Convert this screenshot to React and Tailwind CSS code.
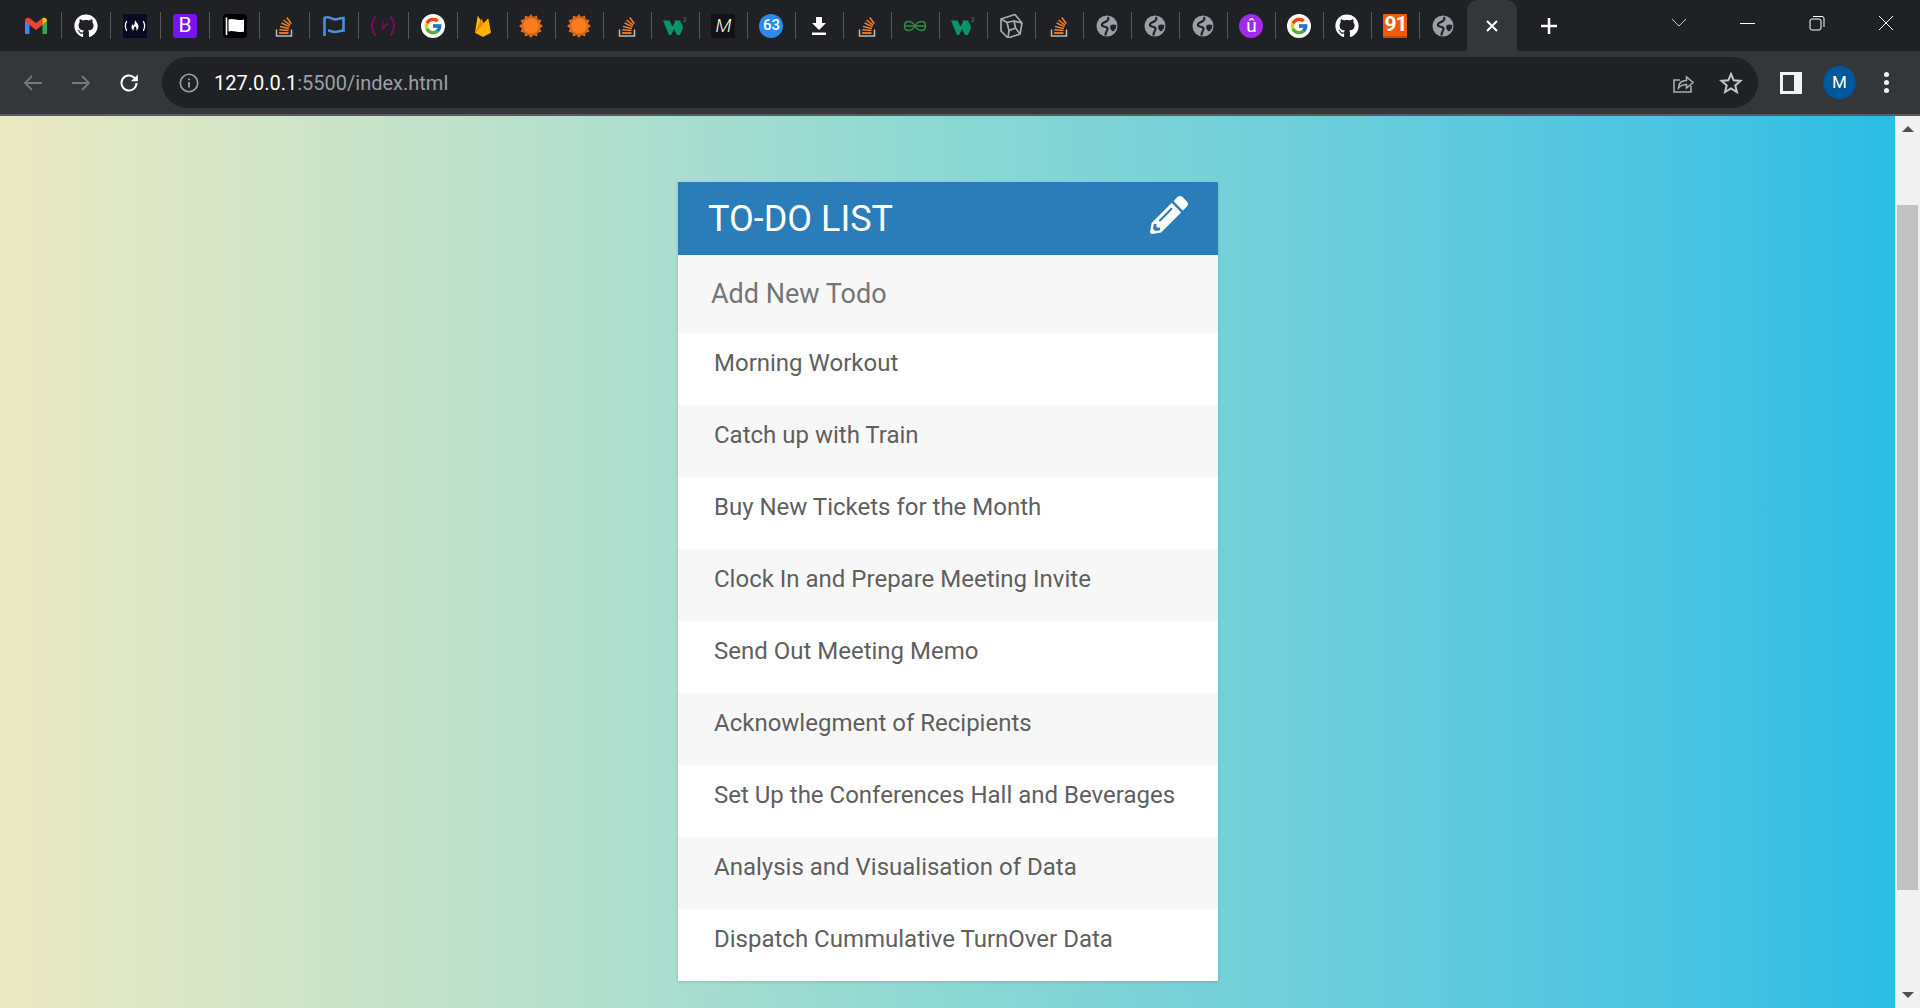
import React from 'react';
import { FaGithub, FaPencilAlt } from 'react-icons/fa';
import { FcGoogle } from 'react-icons/fc';

const todos = [
    'Morning Workout',
    'Catch up with Train',
    'Buy New Tickets for the Month',
    'Clock In and Prepare Meeting Invite',
    'Send Out Meeting Memo',
    'Acknowlegment of Recipients',
    'Set Up the Conferences Hall and Beverages',
    'Analysis and Visualisation of Data',
    'Dispatch Cummulative TurnOver Data',
];

const Gmail = () => (
    <svg viewBox="0 0 24 24" className="w-6 h-6" fill="none">
        <path d="M1 7v13h4.500V10z" fill="#4285f4" />
        <path d="M23 7v13h-4.500V10z" fill="#34a853" />
        <path d="M1 7c0-3 3-4 5-2.500l6 4.500 6-4.500c2-1.500 5-.5 5 2.500l-4.500 4L12 16l-6.500-5z" fill="#ea4335" />
        <path d="M18.500 4.200c2-1 4.500 0 4.500 2.800l-4.500 4z" fill="#fbbc04" />
    </svg>
);

const Github = () => <FaGithub className="w-6 h-6 text-white" />;

const Fcc = () => (
    <div className="w-6 h-6 bg-[#0a0a23] flex items-center justify-center">
        <svg viewBox="0 0 24 24" className="w-6 h-6" fill="none">
            <path d="M3.500 7.500c-1.500 3-1.500 6 0 9M20.500 7.500c1.500 3 1.500 6 0 9" stroke="#fff" strokeWidth="1.300" strokeLinecap="round" />
            <path d="M12 6c.8 2 3.500 3.500 3.500 6.500 0 2-1.500 4-2.500 4 .8-1 1-2.500-1-4.500-.5 1.500-2 2.500-1 4.500-1 0-2.500-1.500-2.500-3.500 0-1.500 1-2.500 1.500-3 0 1 .3 1.500.8 1.500 1-1 1-3 1.200-5.500z" fill="#fff" />
        </svg>
    </div>
);

const Bootstrap = () => (
    <div className="w-6 h-6 rounded-[3px] bg-[#7a12f2] flex items-center justify-center text-white text-[21px] leading-none font-normal font-['Roboto',sans-serif]">B</div>
);

const BlackFlag = () => (
    <div className="w-6 h-6 rounded-[4px] bg-black flex items-center justify-center">
        <svg viewBox="0 0 24 24" className="w-6 h-6">
            <path d="M3.500 3.500v17.500" stroke="#fff" strokeWidth="1.600" />
            <path d="M5.500 5.500c5-2 9 2 15.500 0v12c-6 2-10.500-2-15.500 0z" fill="#fff" />
        </svg>
    </div>
);

const StackOverflow = () => (
    <svg viewBox="0 0 24 24" className="w-6 h-6" fill="none">
        <path d="M4.500 15.500V22h15v-6.500" stroke="#bcbbbb" strokeWidth="1.500" />
        <path d="M7 19h9.500" stroke="#f48024" strokeWidth="1.800" />
        <path d="M7.300 15.800l9.200.6M8 12.400l8.900 2M9.500 9l8 3.600M11.500 6l6.600 5.200M14.800 3.500l4.500 6.300" stroke="#f48024" strokeWidth="1.500" />
    </svg>
);

const BlueFlag = () => (
    <svg viewBox="0 0 24 24" className="w-6 h-6" fill="none">
        <path d="M2.500 22V3.800c4-2 6 .7 9.500 1.500 3 .5 5-1 9.500-1.300v12.500c-4 .3-6 2-9.500 1.500-2-.3-4-1.500-6-1.500" stroke="#4a8fdd" strokeWidth="2.600" />
    </svg>
);

const Regex = () => (
    <svg viewBox="0 0 24 24" className="w-6 h-6" fill="none">
        <path d="M4 3c-4 6-4 12 0 18M20 3c4 6 4 12 0 18" stroke="#70105e" strokeWidth="2.100" strokeLinecap="round" />
        <path d="M11.500 6.500v8l5.500-5" stroke="#70105e" strokeWidth="1.800" />
    </svg>
);

const Google = () => (
    <div className="w-6 h-6 rounded-full bg-white flex items-center justify-center">
        <FcGoogle className="w-5 h-5" />
    </div>
);

const Firebase = () => (
    <svg viewBox="0 0 24 24" className="w-6 h-6">
        <path d="M4 18.700L6.600 2.600c.1-.4.6-.5.8-.1L10.500 8z" fill="#ffc107" />
        <path d="M13 9.500l-2.100-4.200c-.2-.4-.8-.4-1 0L4 18.700z" fill="#f6820c" />
        <path d="M17.500 5.200c-.1-.4-.7-.6-1-.3L4 18.700l7 3.900c.6.3 1.300.3 1.900 0l7.100-3.900z" fill="#ffb300" />
    </svg>
);

const sunTeeth = Array.from({ length: 12 }, (_, i) => i * 30);

const Sun = () => (
    <svg viewBox="0 0 24 24" className="w-6 h-6">
        {sunTeeth.map(a => (
            <path key={a} d="M9.800 3L12 0l2.200 3z" fill="#ea6f1e" transform={`rotate(${a} 12 12)`} />
        ))}
        <circle cx="12" cy="12" r="9.700" fill="#ea6f1e" />
        <circle cx="12" cy="12" r="8.700" fill="#a9561f" />
        <circle cx="12" cy="12" r="8" fill="#fb7c1c" />
    </svg>
);

const W3 = () => (
    <svg viewBox="0 0 24 24" className="w-6 h-6">
        <path d="M0 6.500h6.500l3 6 2.500-4.500-.8-1.500h6l3 7-3.200 7.500h-3L11 15l-3 6H6z" fill="#04956c" />
        <text x="19.800" y="8" fontSize="7" fill="#04956c" fontFamily="Roboto, sans-serif">3</text>
    </svg>
);

const Medium = () => (
    <div className="w-6 h-6 bg-[#121212] flex items-center justify-center text-white text-[19px] leading-none italic font-light font-['Roboto',sans-serif]">M</div>
);

const Badge = () => (
    <div className="w-6 h-6 rounded-full bg-[#2a8bec] flex items-center justify-center text-white text-[15px] leading-none font-medium font-['Roboto',sans-serif]">63</div>
);

const Download = () => (
    <svg viewBox="0 0 24 24" className="w-6 h-6" fill="#fff">
        <path d="M9 3h6v6h4l-7 7-7-7h4z" />
        <path d="M5 18.500h14V21H5z" />
    </svg>
);

const Geeks = () => (
    <svg viewBox="0 0 24 24" className="w-6 h-6" fill="none" stroke="#2f8d46" strokeWidth="1.500">
        <path d="M1.500 12h21" />
        <path d="M12 12C10 8.500 8 7.500 5.500 7.500 3 7.500 1.500 9.500 1.500 12S3 16.500 5.500 16.500C8 16.500 10 15.500 12 12z" />
        <path d="M12 12c2-3.500 4-4.500 6.500-4.500 2.500 0 4 2 4 4.500s-1.500 4.500-4 4.500c-2.500 0-4.500-1-6.500-4.500z" />
    </svg>
);

const Cube = () => (
    <svg viewBox="0 0 24 24" className="w-6 h-6" fill="none" stroke="#aaaaaa" strokeWidth="1.700">
        <path d="M2 5l14-4.500L23 9l-2 11-12 4-7-7z" />
        <path d="M8 8.500l7-1.500 1.500 7-6.500 2.500z" />
        <path d="M2 5l6 3.500M23 9l-8-2M9 24l1-7.500M21 20l-4.500-6" />
    </svg>
);

const Globe = () => (
    <svg viewBox="0 0 24 24" className="w-6 h-6">
        <circle cx="12" cy="12" r="10.500" fill="#9aa0a6" />
        <path d="M13 3c1.500 3-1.500 4.500-4 5.500S6 12 9 12.500s4.500 1.500 3 4-1.500 3.500-1.500 5" fill="none" stroke="#202124" strokeWidth="2.200" />
        <path d="M15.500 11.500c2-1.500 4.500-1 6 0-.3 2.500-1.500 4.500-3.500 6-2-1-3.500-4-2.500-6z" fill="#202124" />
    </svg>
);

const Udemy = () => (
    <div className="w-6 h-6 rounded-full bg-[#a02be8] flex items-center justify-center text-white text-[19px] leading-none font-normal font-['Roboto',sans-serif]">û</div>
);

const Ninety = () => (
    <div className="w-6 h-6 rounded-[1px] bg-[#f25a05] border-b-2 border-[#c84a08] flex items-center justify-center text-white text-[21px] leading-none font-bold tracking-[-1px] font-['Roboto',sans-serif]">91</div>
);

const favicons = [
    Gmail, Github, Fcc, Bootstrap, BlackFlag, StackOverflow, BlueFlag, Regex, Google, Firebase,
    Sun, Sun, StackOverflow, W3, Medium, Badge, Download, StackOverflow, Geeks, W3, Cube,
    StackOverflow, Globe, Globe, Globe, Udemy, Google, Github, Ninety, Globe,
];

const App = () => {
    return (
        <div className="h-[1008px] w-full overflow-hidden flex flex-col bg-white font-['Roboto',sans-serif]">
            {/* tab strip */}
            <div className="h-[51px] bg-[#202124] flex items-center shrink-0 pl-[12px]">
                {favicons.map((Fav, i) => (
                    <div
                        key={i}
                        className={`h-[27px] flex items-center justify-center border-r-[1.5px] border-[#54565a] shrink-0 ${i < 10 ? 'w-[49.6px]' : 'w-[48px]'}`}
                    >
                        <Fav />
                    </div>
                ))}
                <div className="w-[50px] h-[51px] -ml-[0.5px] bg-[#35363a] rounded-t-[10px] flex items-center justify-center shrink-0">
                    <svg viewBox="0 0 16 16" className="w-4 h-4" stroke="#fff" strokeWidth="2"><path d="M3 3l10 10M13 3L3 13" /></svg>
                </div>
                <svg viewBox="0 0 20 20" className="w-5 h-5 ml-[22px] shrink-0" stroke="#fff" strokeWidth="2.500"><path d="M10 2v16M2 10h16" /></svg>
                <div className="flex-1" />
                <svg viewBox="0 0 16 10" className="w-4 h-[10px] mr-[53px] mb-[6px] shrink-0" fill="none" stroke="#c8c8c8"><path d="M1 1l7 7 7-7" /></svg>
                <div className="w-[15px] h-px bg-white mr-[54px] mb-[5px] shrink-0" />
                <svg viewBox="0 0 16 16" className="w-4 h-4 mr-[53px] mb-[5px] shrink-0" fill="none" stroke="#fff"><rect x="1" y="4" width="11" height="11" rx="2" /><path d="M4 1.500h9a2 2 0 0 1 2 2V12" /></svg>
                <svg viewBox="0 0 16 16" className="w-4 h-4 mr-[26px] mb-[5px] shrink-0" stroke="#fff"><path d="M1 1l14 14M15 1L1 15" /></svg>
            </div>

            {/* toolbar */}
            <div className="h-[63px] bg-[#35363a] border-b-[2px] border-[#5a5b5e] box-content flex items-center shrink-0">
                <svg viewBox="0 0 24 24" className="w-6 h-6 ml-[21px] shrink-0" fill="none" stroke="#77787b" strokeWidth="1.800"><path d="M21 12H4M11 5l-7 7 7 7" /></svg>
                <svg viewBox="0 0 24 24" className="w-6 h-6 ml-[24px] shrink-0" fill="none" stroke="#77787b" strokeWidth="1.800"><path d="M3 12h17M13 5l7 7-7 7" /></svg>
                <svg viewBox="0 0 24 24" className="w-6 h-6 ml-[24px] shrink-0" fill="none" stroke="#fff" strokeWidth="2"><path d="M19.500 12a7.500 7.500 0 1 1-2.200-5.300L20 9.500" /><path d="M20.800 3.500v6.800H14" fill="#fff" stroke="none" /></svg>
                <div className="ml-[21px] w-[1596px] h-[51px] rounded-full bg-[#202124] flex items-center shrink-0">
                    <svg viewBox="0 0 24 24" className="w-[22px] h-[22px] ml-[16px] shrink-0" fill="none" stroke="#9aa0a6" strokeWidth="1.800"><circle cx="12" cy="12" r="9.500" /><path d="M12 11v6M12 7v2" strokeWidth="2" /></svg>
                    <span className="ml-[14px] text-[20px] text-white">127.0.0.1<span className="text-[#9aa0a6]">:5500/index.html</span></span>
                    <div className="flex-1" />
                    <svg viewBox="0 0 24 24" className="w-6 h-6 mr-[24px] shrink-0" fill="none" stroke="#a9abae" strokeWidth="1.600"><path d="M20 15v6H3V9h6" /><path d="M7.500 17c0-5 3-7.500 8-7.500V6l6.500 5.500-6.500 5.500v-3.500c-3.500 0-6 1-8 3.500z" /></svg>
                    <svg viewBox="0 0 24 24" className="w-6 h-6 mr-[15px] shrink-0" fill="none" stroke="#c4c6c9" strokeWidth="2"><path d="M12 3l2.700 6.300 6.800.6-5.200 4.500 1.600 6.700L12 17.500 6.100 21l1.600-6.700L2.500 9.900l6.800-.6z" /></svg>
                </div>
                <div className="ml-[22px] w-[22px] h-[22px] bg-[#f1f3f4] flex items-center shrink-0 pl-[3px]">
                    <div className="w-[11px] h-[16px] bg-[#35363a]" />
                </div>
                <div className="ml-[21px] w-[33px] h-[33px] rounded-full bg-[#01579b] flex items-center justify-center text-white text-[17px] shrink-0">M</div>
                <div className="ml-[28px] flex flex-col gap-[3px] shrink-0">
                    <div className="w-[5px] h-[5px] rounded-full bg-[#f1f3f4]" />
                    <div className="w-[5px] h-[5px] rounded-full bg-[#f1f3f4]" />
                    <div className="w-[5px] h-[5px] rounded-full bg-[#f1f3f4]" />
                </div>
            </div>

            {/* page */}
            <div className="flex-1 min-h-0 flex">
                <main className="flex-1 flex justify-center items-start pt-[66px] bg-gradient-to-r from-[#ebe9c2] via-[#8bd8d3] via-50% to-[#29bde5]">
                    <div className="w-[540px] ml-[1px] shadow-[0_1px_3px_rgba(0,0,0,0.15)]">
                        <div className="h-[73px] bg-[#2a7db8] flex items-center justify-between pl-[30px] pr-[30px]">
                            <h1 className="text-[36px] text-white leading-none">TO-DO LIST</h1>
                            <FaPencilAlt className="w-[38px] h-[38px] text-white -mt-[8px]" />
                        </div>
                        <div className="h-[78px] bg-[#f7f7f7] flex items-center pl-[33px]">
                            <span className="text-[27px] text-[#757575]">Add New Todo</span>
                        </div>
                        {todos.map((todo, i) => (
                            <div
                                key={todo}
                                className={`h-[72px] pl-[36px] pt-[15px] text-[24px] leading-[30px] text-[#5f5f5f] ${i % 2 === 0 ? 'bg-white' : 'bg-[#f7f7f7]'}`}
                            >
                                {todo}
                            </div>
                        ))}
                    </div>
                </main>

                {/* scrollbar */}
                <div className="w-[25px] bg-[#f1f1f1] flex flex-col items-center shrink-0">
                    <div className="w-0 h-0 mt-[10px] border-x-[6px] border-x-transparent border-b-[6px] border-b-[#505050]" />
                    <div className="w-[21px] h-[685px] mt-[73px] bg-[#c1c1c1]" />
                    <div className="flex-1" />
                    <div className="w-0 h-0 mb-[10px] border-x-[6px] border-x-transparent border-t-[6px] border-t-[#505050]" />
                </div>
            </div>
        </div>
    );
};

export default App;
